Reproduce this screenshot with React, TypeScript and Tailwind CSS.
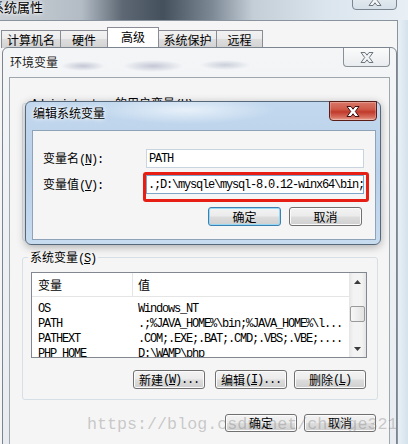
import React from "react";

const mono = "font-['Liberation_Mono',monospace] tracking-[-1.2px]";

function XGlyph({ active = false }: { active?: boolean }) {
  return (
    <svg width="14" height="11" viewBox="0 0 14 11" aria-hidden="true">
      <polygon
        points="1,0.5 5,0.5 7,3.2 9,0.5 13,0.5 9.3,5.5 13,10.5 9,10.5 7,7.8 5,10.5 1,10.5 4.7,5.5"
        fill={active ? "#ffffff" : "#f2f4f6"}
        stroke={active ? "#3d1010" : "#6d757e"}
        strokeWidth="1"
        strokeLinejoin="round"
      />
    </svg>
  );
}

function Arrow({ down = false }: { down?: boolean }) {
  return (
    <svg width="7" height="4" viewBox="0 0 7 4" aria-hidden="true">
      <polygon points={down ? "0,0 7,0 3.5,4" : "0,4 7,4 3.5,0"} fill="#3a3a3a" />
    </svg>
  );
}

// mnemonic like (N) with the letter underlined
function Hot({ k }: { k: string }) {
  return (
    <span className={mono}>
      (<span className="underline underline-offset-1">{k}</span>)
    </span>
  );
}

function Btn({
  children,
  className = "",
  focus = false,
}: {
  children: React.ReactNode;
  className?: string;
  focus?: boolean;
}) {
  return (
    <div
      className={`flex items-center justify-center rounded-[3px] border bg-[linear-gradient(#f3f3f3_0%,#ebebeb_48%,#dddddd_52%,#cfcfcf_100%)] leading-none text-black ${
        focus
          ? "border-[#3c7fb1] shadow-[inset_0_0_0_1px_#97d9f5]"
          : "border-[#707070] shadow-[inset_0_0_0_1px_#fbfbfb]"
      } ${className}`}
    >
      {children}
    </div>
  );
}

const tabs = [
  { label: "计算机名", w: "w-[60px]", on: false },
  { label: "硬件", w: "w-[48px]", on: false },
  { label: "高级", w: "w-[52px]", on: true },
  { label: "系统保护", w: "w-[59px]", on: false },
  { label: "远程", w: "w-[47px]", on: false },
];

const rows = [
  ["OS", "Windows_NT"],
  ["PATH", ".;%JAVA_HOME%\\bin;%JAVA_HOME%\\l..."],
  ["PATHEXT", ".COM;.EXE;.BAT;.CMD;.VBS;.VBE;...."],
  ["PHP_HOME", "D:\\WAMP\\php"],
];

export default function App() {
  return (
    <div className="relative h-[444px] w-[408px] overflow-hidden bg-[#dce7ef] font-['Noto_Sans_CJK_SC',sans-serif] text-[12px] leading-[14px] text-black">
      {/* 系统属性 window behind */}
      <div className="flex h-full flex-col">
        <div className="flex h-[20px] shrink-0 items-start bg-[linear-gradient(90deg,#c9cfd5_0%,#b3bcc5_20%,#5d6874_30%,#44505c_40%,#7d8995_52%,#c3ced7_62%,#dbe5ed_80%,#e8eff5_100%)]">
          <span className="-ml-[9px] text-[13px] leading-[13px] [text-shadow:0_0_5px_#fff,0_0_3px_#fff]">
            系统属性
          </span>
          <div className="-mt-[10px] ml-auto mr-[11px] flex h-[20px] w-[45px] items-end justify-center rounded-b-[4px] border border-[#7a8590] bg-[linear-gradient(#edf2f6,#d6e0e8)] pb-[3px]">
            <XGlyph />
          </div>
        </div>
        <div className="flex flex-1">
          <div className="w-[398px] border-r border-t border-[#8a949e] bg-[#f5f5f5] pl-[1px] pt-[6px]">
            <div className="flex h-[21px] items-end">
              {tabs.map((t) => (
                <div
                  key={t.label}
                  className={`-mr-px flex items-center justify-center border-x border-t border-[#898c95] ${t.w} ${
                    t.on
                      ? "h-[21px] bg-white pb-[2px]"
                      : "h-[18px] bg-[linear-gradient(#f2f2f2_0%,#ebebeb_50%,#dddddd_50%,#d2d2d2_100%)]"
                  }`}
                >
                  {t.label}
                </div>
              ))}
            </div>
          </div>
          <div className="flex-1 bg-[linear-gradient(90deg,#e9f0f5,#d4e2ec)]" />
        </div>
      </div>

      {/* 环境变量 window */}
      <div className="absolute left-[2px] top-[47px] flex h-[410px] w-[395px] flex-col rounded-t-[6px] border border-[#7b858f] bg-[linear-gradient(#f3f5f7,#e8ecf0)]">
        <div className="flex h-[29px] shrink-0 items-start justify-between bg-[radial-gradient(ellipse_22px_5px_at_80px_18px,rgba(110,115,150,0.35),transparent),radial-gradient(ellipse_30px_6px_at_150px_18px,rgba(110,115,150,0.35),transparent),radial-gradient(ellipse_25px_5px_at_222px_17px,rgba(110,120,150,0.3),transparent)]">
          <span className="pl-[7px] pt-[7px] text-[#1e1e1e] [text-shadow:0_0_5px_#fff,0_0_3px_#fff]">
            环境变量
          </span>
          <div className="mr-[6px] flex h-[19px] w-[47px] items-center justify-center rounded-b-[4px] border border-t-0 border-[#8a9096] bg-[linear-gradient(#fbfbfb,#e9ecef)]">
            <XGlyph />
          </div>
        </div>

        <div className="mx-[6px] flex flex-1 flex-col border border-[#9ea6ae] bg-[#f5f5f5]">
          <fieldset className="ml-[12px] mt-[17px] w-[356px] rounded-[3px] border border-[#d5dfe5]">
            <legend className="ml-[6px] h-[16px] px-[2px] leading-[16px]">
              <span className={mono}>Administrator </span>的用户变量
              <Hot k="U" />
            </legend>
            <div className="h-[129px]" />
          </fieldset>

          <fieldset className="ml-[12px] mt-[8px] w-[356px] rounded-[3px] border border-[#d5dfe5] pb-[10px]">
            <legend className="ml-[5px] h-[16px] px-[2px] leading-[16px]">
              系统变量
              <Hot k="S" />
            </legend>
            <div className="ml-[8px] mt-[7px] flex h-[86px] w-[336px] border border-[#828790] bg-white">
              <div className="flex-1 overflow-hidden">
                <div className="flex h-[24px] border-b border-[#e5e5e5]">
                  <div className="flex w-[101px] items-center border-r border-[#e5e5e5] pl-[6px]">变量</div>
                  <div className="flex items-center pl-[5px]">值</div>
                </div>
                <div className="pt-[4px]">
                  {rows.map(([n, v]) => (
                    <div key={n} className={`flex h-[15px] items-center whitespace-nowrap ${mono}`}>
                      <div className="w-[101px] pl-[6px]">{n}</div>
                      <div className="pl-[5px]">{v}</div>
                    </div>
                  ))}
                </div>
              </div>
              <div className="flex w-[17px] flex-col bg-[linear-gradient(90deg,#e4e4e4,#f3f3f3_25%,#f3f3f3_75%,#e4e4e4)]">
                <div className="flex h-[17px] items-center justify-center">
                  <Arrow />
                </div>
                <div className="flex-1 pt-[16px]">
                  <div className="mx-[1px] h-[16px] rounded-[2px] border border-[#9a9a9a] bg-[linear-gradient(90deg,#f7f7f7,#e2e2e2)]" />
                </div>
                <div className="flex h-[17px] items-center justify-center">
                  <Arrow down />
                </div>
              </div>
            </div>
            <div className="mt-[12px] flex justify-end pr-[11px]">
              <Btn className="mr-[10px] h-[19px] w-[72px]">
                新建<Hot k="W" />
                <span className={mono}>...</span>
              </Btn>
              <Btn className="mr-[7px] h-[19px] w-[72px]">
                编辑<Hot k="I" />
                <span className={mono}>...</span>
              </Btn>
              <Btn className="h-[19px] w-[72px]">
                删除<Hot k="L" />
              </Btn>
            </div>
          </fieldset>

          <div className="mt-[14px] flex justify-end gap-[7px] pr-[13px]">
            <Btn className="h-[18px] w-[72px]">确定</Btn>
            <Btn className="h-[18px] w-[72px]">取消</Btn>
          </div>
        </div>
      </div>

      {/* 编辑系统变量 dialog */}
      <div className="absolute left-[25px] top-[101px] flex h-[144px] w-[356px] flex-col rounded-[6px] border border-[#56677a] bg-[radial-gradient(ellipse_90px_14px_at_160px_8px,rgba(235,243,251,0.9),transparent),linear-gradient(180deg,#c2d8ee_0%,#b8d0e9_50%,#c8dcf0_100%)] shadow-[0_2px_8px_rgba(0,0,0,0.3)]">
        <div className="flex h-[28px] shrink-0 items-start justify-between">
          <span className="pl-[7px] pt-[4px] [text-shadow:0_0_6px_#fff,0_0_3px_#fff]">编辑系统变量</span>
          <div className="-mt-px mr-[3px] flex h-[20px] w-[48px] items-center justify-center rounded-b-[4px] border border-[#5b1d17] bg-[linear-gradient(#d9786a_0%,#cf5a48_40%,#c0392b_55%,#d7705f_85%,#e9a596_100%)] shadow-[inset_0_0_0_1px_rgba(255,255,255,0.25)]">
            <XGlyph active />
          </div>
        </div>
        <div className="mb-[4px] ml-[6px] mr-[4px] flex-1 border border-[#8fa3b8] bg-[#f5f5f5] pl-[10px] pt-[18px]">
          <div className="flex items-center">
            <div className="w-[103px] whitespace-nowrap">
              变量名<Hot k="N" />
              <span className={mono}>:</span>
            </div>
            <div className="flex h-[19px] w-[218px] items-center border border-[#c8d4e0] bg-white pl-[2px]">
              <span className={mono}>PATH</span>
            </div>
          </div>
          <div className="mt-[7px] flex items-center">
            <div className="w-[103px] whitespace-nowrap">
              变量值<Hot k="V" />
              <span className={mono}>:</span>
            </div>
            <div className="relative">
              <div className="flex h-[19px] w-[218px] items-center overflow-hidden whitespace-nowrap border border-[#7ea4c9] bg-white pl-[1px]">
                <span className={mono}>{".;D:\\mysqle\\mysql-8.0.12-winx64\\bin;"}</span>
              </div>
              <div className="absolute -left-[3px] -top-[3px] h-[30px] w-[226px] rounded-[3px] border-[3px] border-[#e61e14]" />
            </div>
          </div>
          <div className="mt-[13px] flex justify-end gap-[8px] pr-[13px]">
            <Btn focus className="h-[19px] w-[73px]">
              确定
            </Btn>
            <Btn className="h-[19px] w-[73px]">取消</Btn>
          </div>
        </div>
      </div>

      {/* watermark */}
      <div className="pointer-events-none absolute left-[87px] top-[417px] whitespace-nowrap font-['Liberation_Mono',monospace] text-[16.7px] leading-none text-[rgba(130,130,130,0.4)]">
        https://blog.csdn.net/chenge321
      </div>
    </div>
  );
}
